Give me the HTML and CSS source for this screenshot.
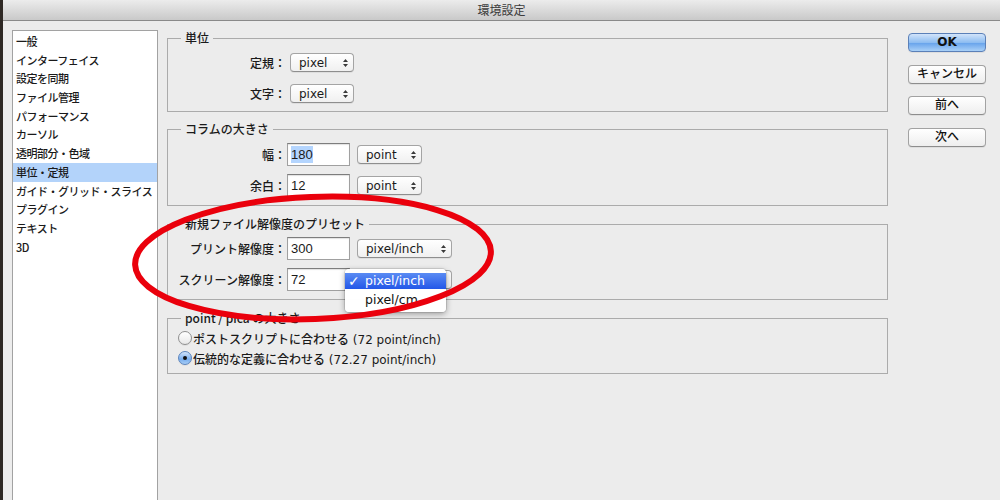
FILE: index.html
```html
<!DOCTYPE html>
<html lang="ja">

<head>
    <meta charset="utf-8">
    <title>環境設定</title>
    <link rel="stylesheet" href="styles.css">
</head>

<body>
    <header class="titlebar">環境設定</header>
    <div class="window">
        <ul class="sidebar">
            <li>一般</li>
            <li>インターフェイス</li>
            <li>設定を同期</li>
            <li>ファイル管理</li>
            <li>パフォーマンス</li>
            <li>カーソル</li>
            <li>透明部分・色域</li>
            <li class="selected">単位・定規</li>
            <li>ガイド・グリッド・スライス</li>
            <li>プラグイン</li>
            <li>テキスト</li>
            <li>3D</li>
        </ul>

        <main class="panel">
            <fieldset class="group group-units">
                <legend>単位</legend>
                <div class="row">
                    <span class="lbl">定規：</span>
                    <div class="popup w-pixel">pixel<svg class="arrows" width="7" height="10"><path d="M1 4 L3.5 1 L6 4Z M1 6 L3.5 9 L6 6Z"/></svg></div>
                </div>
                <div class="row">
                    <span class="lbl">文字：</span>
                    <div class="popup w-pixel">pixel<svg class="arrows" width="7" height="10"><path d="M1 4 L3.5 1 L6 4Z M1 6 L3.5 9 L6 6Z"/></svg></div>
                </div>
            </fieldset>

            <fieldset class="group group-column">
                <legend>コラムの大きさ</legend>
                <div class="row">
                    <span class="lbl">幅：</span>
                    <div class="field"><span class="sel">180</span></div>
                    <div class="popup w-point">point<svg class="arrows" width="7" height="10"><path d="M1 4 L3.5 1 L6 4Z M1 6 L3.5 9 L6 6Z"/></svg></div>
                </div>
                <div class="row">
                    <span class="lbl">余白：</span>
                    <div class="field">12</div>
                    <div class="popup w-point">point<svg class="arrows" width="7" height="10"><path d="M1 4 L3.5 1 L6 4Z M1 6 L3.5 9 L6 6Z"/></svg></div>
                </div>
            </fieldset>

            <fieldset class="group group-preset">
                <legend>新規ファイル解像度のプリセット</legend>
                <div class="row">
                    <span class="lbl">プリント解像度：</span>
                    <div class="field">300</div>
                    <div class="popup w-res">pixel/inch<svg class="arrows" width="7" height="10"><path d="M1 4 L3.5 1 L6 4Z M1 6 L3.5 9 L6 6Z"/></svg></div>
                </div>
                <div class="row">
                    <span class="lbl">スクリーン解像度：</span>
                    <div class="field">72</div>
                    <div class="popup w-res">pixel/inch<svg class="arrows" width="7" height="10"><path d="M1 4 L3.5 1 L6 4Z M1 6 L3.5 9 L6 6Z"/></svg>
                        <ul class="menu">
                            <li class="active"><span class="check">✓</span>pixel/inch</li>
                            <li>pixel/cm</li>
                        </ul>
                    </div>
                </div>
            </fieldset>

            <fieldset class="group group-point">
                <legend>point / pica の大きさ</legend>
                <div class="radio-row">
                    <span class="radio"></span>ポストスクリプトに合わせる (72 point/inch)
                </div>
                <div class="radio-row">
                    <span class="radio checked"></span>伝統的な定義に合わせる (72.27 point/inch)
                </div>
            </fieldset>
        </main>

        <aside class="buttons">
            <button class="btn btn-default" type="button">OK</button>
            <button class="btn" type="button">キャンセル</button>
            <button class="btn" type="button">前へ</button>
            <button class="btn" type="button">次へ</button>
        </aside>
    </div>

    <!-- red marker circle drawn over the dialog -->
    <svg class="marker" width="1000" height="500">
        <ellipse cx="313" cy="258" rx="178" ry="61" transform="rotate(-2.2 313 258)" fill="none" stroke="#ea000c" stroke-width="6"/>
    </svg>
</body>

</html>
```

FILE: styles.css
```css
html,
body {
    margin: 0;
    height: 100%;
    overflow: hidden;
}

body {
    position: relative;
    background-color: #ececec;
    border-left: 3px solid #2e2824;
    font-family: "DejaVu Sans", "Noto Sans CJK JP", sans-serif;
    font-size: 12px;
    font-weight: 500;
    color: #1a1a1a;
}

.titlebar {
    height: 20px;
    line-height: 20px;
    text-align: center;
    font-family: "Noto Sans CJK JP", sans-serif;
    font-size: 12px;
    font-weight: 400;
    color: #3c3c3c;
    background: linear-gradient(#ececec, #c9c9c9);
    border-bottom: 1px solid #8a8a8a;
}

.window {
    display: flex;
    align-items: flex-start;
}

.sidebar {
    list-style: none;
    margin: 9px 0 0 9px;
    padding: 1px 0 0 0;
    width: 146px;
    height: 490px;
    box-sizing: border-box;
    background-color: white;
    border: 1px solid #a2a2a2;
    border-bottom: none;
    font-family: "Noto Sans CJK JP", sans-serif;
    font-size: 11px;
    letter-spacing: -0.5px;
}

.sidebar li {
    height: 18.7px;
    line-height: 18.7px;
    padding-left: 3px;
    white-space: nowrap;
}

.sidebar li.selected {
    background-color: #b3d3fa;
}

.panel {
    margin: 9px 0 0 9px;
    width: 721px;
}

.group {
    margin: 10px 0 0 0;
    padding: 0;
    border: 1px solid #ababab;
    min-inline-size: 0;
}

.group legend {
    margin-left: 13px;
    padding: 0 4px;
    line-height: 16px;
    font-family: "Noto Sans CJK JP", sans-serif;
    font-size: 12px;
    color: #1a1a1a;
}

.group-units {
    margin-top: 0;
    padding: 4px 0 5px 0;
}

.group-column {
    margin-top: 9px;
    padding: 5px 0 7px 0;
}

.group-preset {
    padding: 4px 0 7px 0;
}

.group-point {
    padding: 2px 0 5px 0;
}

.row {
    display: flex;
    align-items: center;
    height: 25px;
}

.row + .row {
    margin-top: 6px;
}

.lbl {
    width: 118px;
    flex: none;
    text-align: right;
    font-family: "Noto Sans CJK JP", sans-serif;
    white-space: nowrap;
}

.popup {
    position: relative;
    display: flex;
    align-items: center;
    justify-content: space-between;
    box-sizing: border-box;
    height: 19px;
    margin-left: 4px;
    padding: 0 4px 0 8px;
    background: linear-gradient(#ffffff, #f0f0f0);
    border: 1px solid #a4a4a4;
    border-bottom-color: #8e8e8e;
    border-radius: 4px;
    box-shadow: 0 1px 0 rgba(0, 0, 0, 0.06);
}

.arrows path {
    fill: #3a3a3a;
}

.w-pixel {
    width: 64px;
}

.w-point {
    width: 65px;
    margin-left: 7px;
}

.w-res {
    width: 95px;
    margin-left: 7px;
}

.field {
    box-sizing: border-box;
    width: 63px;
    height: 23px;
    margin-left: 1px;
    padding: 0 3px;
    line-height: 21px;
    background-color: white;
    border: 1px solid #a0a0a0;
    border-top-color: #7d7d7d;
    box-shadow: inset 0 1px 1px rgba(0, 0, 0, 0.12);
    font-family: "Liberation Sans", sans-serif;
    font-size: 13px;
}

.sel {
    background-color: #b4d5fe;
    padding: 1px 0;
}

.menu {
    position: absolute;
    left: -13px;
    top: -2px;
    width: 101px;
    margin: 0;
    padding: 4px 0;
    list-style: none;
    box-sizing: border-box;
    background-color: rgba(255, 255, 255, 0.98);
    border-radius: 4px;
    box-shadow: 0 2px 6px rgba(0, 0, 0, 0.35), 0 0 0 1px rgba(0, 0, 0, 0.1);
    font-size: 12.5px;
}

.menu li {
    height: 16px;
    line-height: 16px;
    padding-left: 20px;
    position: relative;
    color: #111;
}

.menu li + li {
    margin-top: 3px;
}

.menu li.active {
    color: white;
    background: linear-gradient(#5a8bf3, #2357e8);
}

.check {
    position: absolute;
    left: 3px;
    font-size: 14px;
    font-weight: bold;
}

.radio-row {
    display: flex;
    align-items: center;
    height: 20px;
    font-family: "DejaVu Sans", "Noto Sans CJK JP", sans-serif;
    white-space: nowrap;
}

.radio {
    box-sizing: border-box;
    width: 14px;
    height: 14px;
    margin: 0 1px 0 10px;
    border-radius: 50%;
    border: 1px solid #8f8f8f;
    background: linear-gradient(#ffffff, #e8e8e8);
    box-shadow: 0 1px 0 rgba(0, 0, 0, 0.06);
    display: flex;
    align-items: center;
    justify-content: center;
}

.radio.checked {
    border-color: #5a84bd;
    background: linear-gradient(#d3e5fb, #78aeef 60%, #a8cdf6);
}

.radio.checked::after {
    content: "";
    width: 4px;
    height: 4px;
    border-radius: 50%;
    background-color: #111;
}

.buttons {
    display: flex;
    flex-direction: column;
    gap: 12.5px;
    margin: 12px 0 0 20px;
    width: 78px;
}

.btn {
    box-sizing: border-box;
    height: 19px;
    padding: 0;
    background: linear-gradient(#ffffff, #eeeeee);
    border: 1px solid #a2a2a2;
    border-bottom-color: #8d8d8d;
    border-radius: 4px;
    box-shadow: 0 1px 0 rgba(0, 0, 0, 0.06);
    font-family: "DejaVu Sans", "Noto Sans CJK JP", sans-serif;
    font-size: 12px;
    font-weight: 500;
    line-height: 17px;
    color: #111;
}

.btn-default {
    font-weight: bold;
    border-color: #5b80b8;
    background: linear-gradient(#d2e4fa, #8ebdf1 50%, #6aa5ec 55%, #a9d0f7);
}

.marker {
    position: absolute;
    left: -3px;
    top: 0;
    pointer-events: none;
}
```
